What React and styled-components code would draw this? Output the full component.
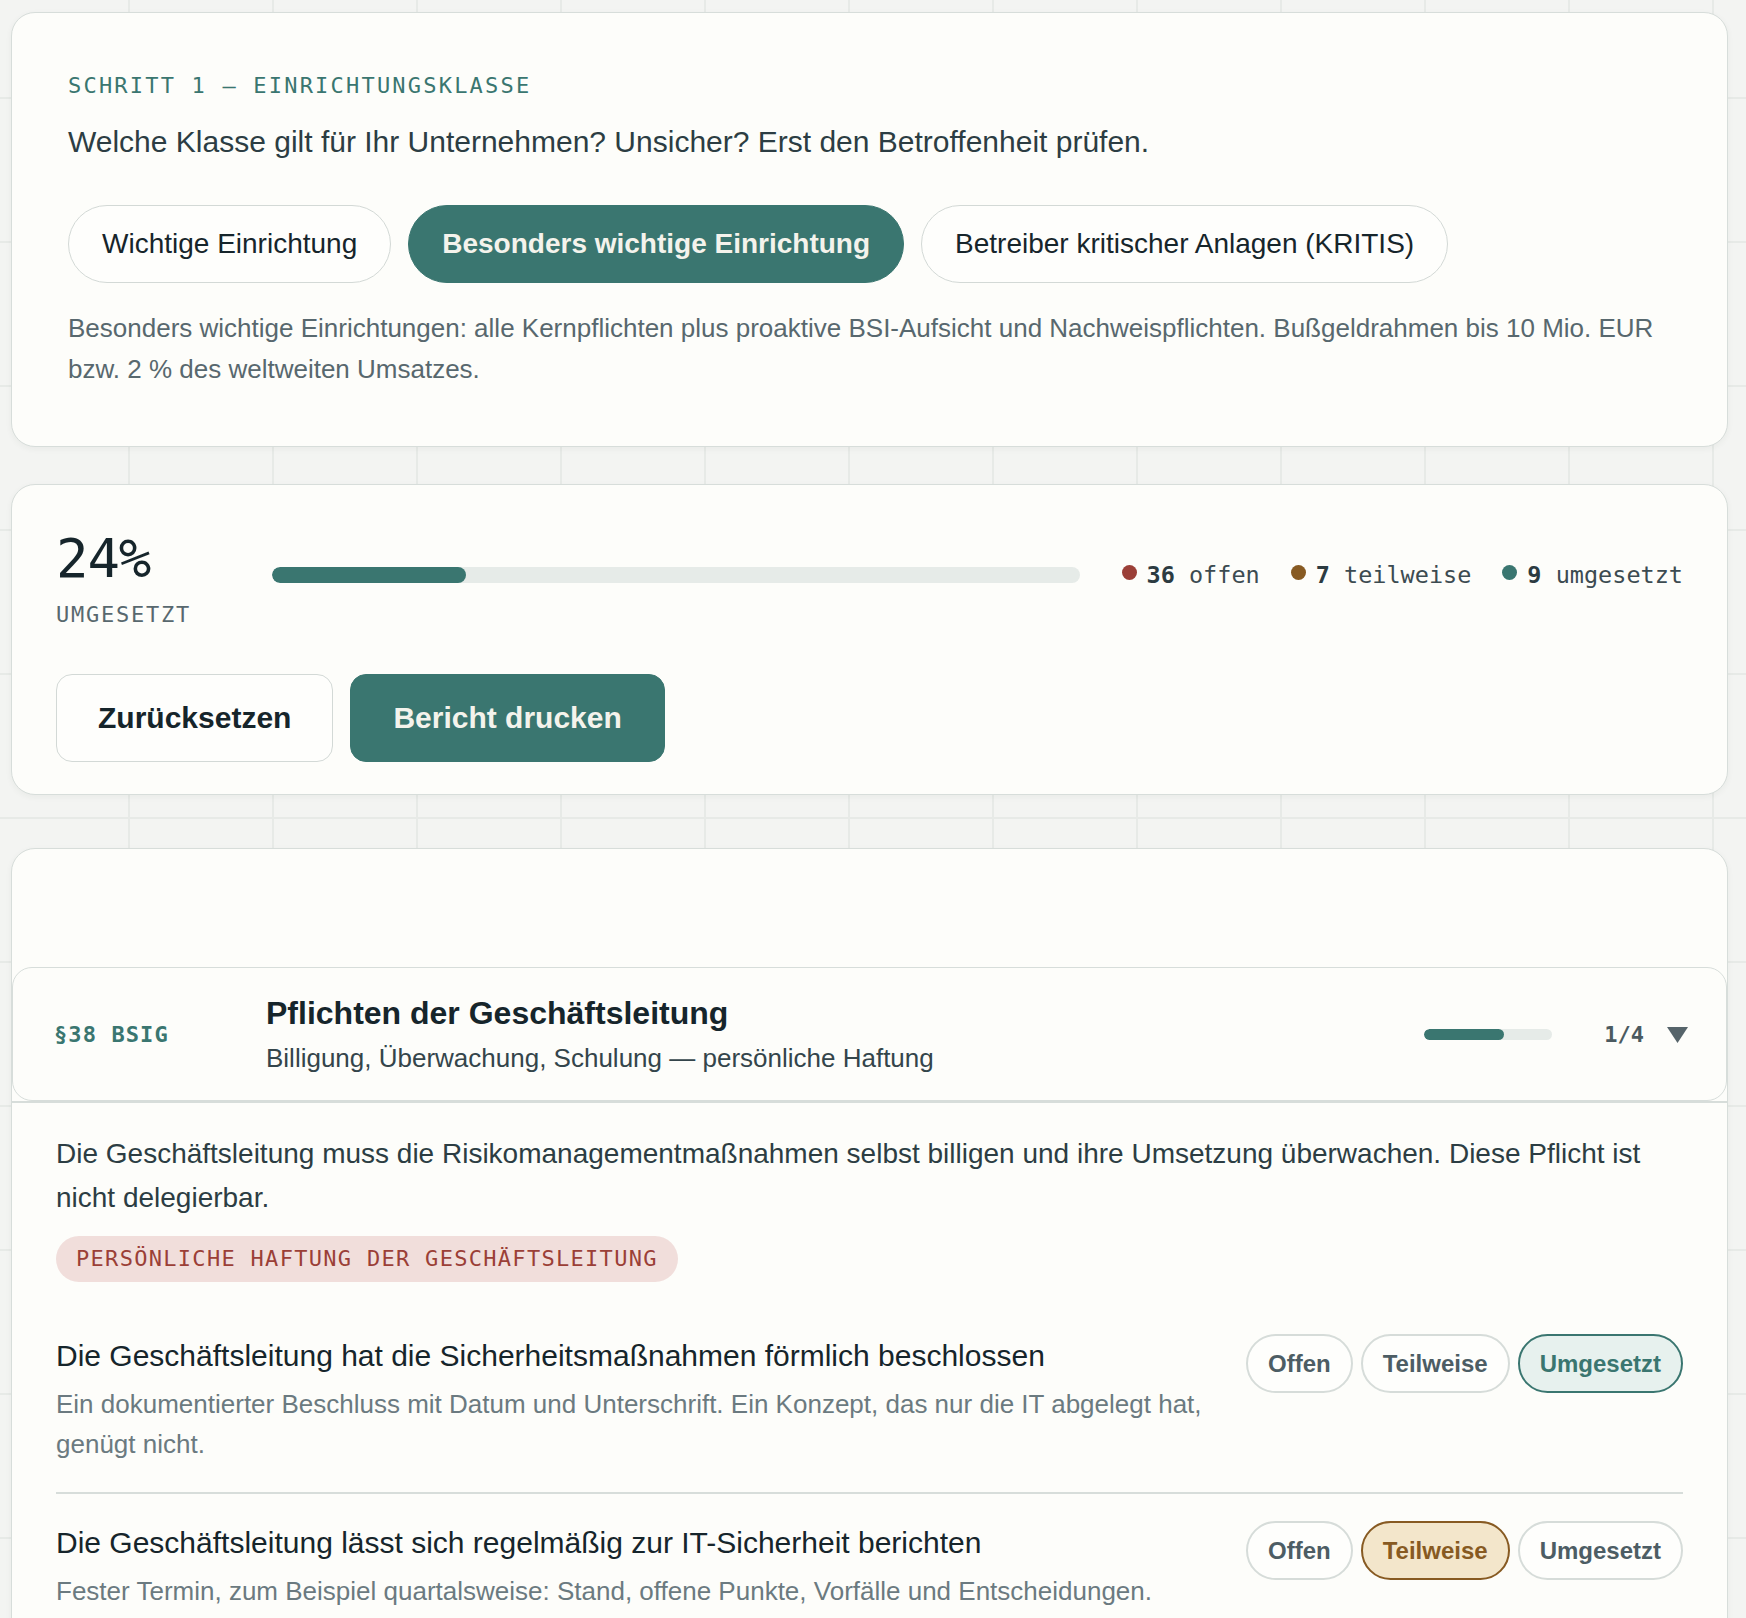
import React from "react";
import styled, { createGlobalStyle, css } from "styled-components";

const C = {
  teal: "#3a7670",
  bg: "#f3f4f2",
  grid: "#e7eae7",
  card: "#fdfdfa",
  border: "#d7ddda",
  ink: "#16252b",
  slate: "#2c3d43",
  muted: "#58686e",
  soft: "#6b7a80",
  red: "#9b3f37",
  brown: "#875a22",
};

const SANS = `"Liberation Sans", Arial, Helvetica, sans-serif`;
const MONO = `"DejaVu Sans Mono", "Liberation Mono", monospace`;

const Global = createGlobalStyle`
  html, body { margin: 0; padding: 0; }
  body {
    font-family: ${SANS};
    background-color: ${C.bg};
    background-image:
      linear-gradient(to right, ${C.grid} 2px, transparent 2px),
      linear-gradient(to bottom, ${C.grid} 2px, transparent 2px);
    background-size: 144px 144px;
    background-position: 128px 97px;
    color: ${C.ink};
  }
  * { box-sizing: border-box; }
  button { font-family: inherit; cursor: pointer; }
`;

const Page = styled.main`
  display: flex;
  flex-direction: column;
  padding: 12px 18px 40px 11px;
`;

const Panel = styled.section`
  background: ${C.card};
  border: 1px solid ${C.border};
  border-radius: 24px;
  box-shadow: 0 2px 6px rgba(30, 50, 45, 0.05);
  margin-top: ${(p) => p.$gap || 0}px;
`;

/* ---------- Step 1 ---------- */
const ClassPanel = styled(Panel)`
  padding: 56px;
`;

const Eyebrow = styled.div`
  font-family: ${MONO};
  font-size: 22px;
  line-height: 33px;
  letter-spacing: 0.1em;
  color: ${C.teal};
  text-transform: uppercase;
`;

const Question = styled.p`
  margin: 19px 0 0;
  font-size: 30px;
  line-height: 42px;
  color: ${C.slate};
`;

const ChipRow = styled.div`
  display: flex;
  gap: 17px;
  margin-top: 42px;
`;

const Chip = styled.button`
  height: 78px;
  padding: 0 33px;
  border-radius: 999px;
  font-size: 28px;
  line-height: 36px;
  border: 1px solid ${(p) => (p.$active ? C.teal : "#d3d9d6")};
  background: ${(p) => (p.$active ? C.teal : "#fefefc")};
  color: ${(p) => (p.$active ? "#f4f3ec" : C.ink)};
  font-weight: ${(p) => (p.$active ? 700 : 400)};
`;

const ClassNote = styled.p`
  margin: 25px 0 0;
  font-size: 26px;
  line-height: 40.8px;
  color: ${C.muted};
`;

/* ---------- Progress ---------- */
const ProgressPanel = styled(Panel)`
  padding: 47px 44px 32px;
`;

const StatRow = styled.div`
  display: flex;
  align-items: center;
  gap: 38px;
`;

const Stat = styled.div`
  width: 178px;
  flex-shrink: 0;
`;

const BigNumber = styled.div`
  font-family: ${MONO};
  font-size: 54px;
  line-height: 54px;
  letter-spacing: -0.02em;
  color: ${C.ink};
`;

const StatLabel = styled.div`
  margin-top: 16px;
  font-family: ${MONO};
  font-size: 22px;
  line-height: 26px;
  letter-spacing: 0.08em;
  color: ${C.muted};
`;

const Track = styled.div`
  flex: 1;
  height: 16px;
  border-radius: 999px;
  background: #e6ebe8;
  overflow: hidden;
  margin-top: -10px;
`;

const Fill = styled.div`
  height: 100%;
  border-radius: 999px;
  background: ${C.teal};
`;

const Legend = styled.div`
  display: flex;
  gap: 31px;
  margin-top: -10px;
  margin-left: 4px;
`;

const LegendItem = styled.span`
  display: inline-flex;
  align-items: center;
  gap: 10px;
  font-family: ${MONO};
  font-size: 23.5px;
  line-height: 30px;
  color: #3c4b51;
  white-space: nowrap;
  b { color: #2c3b41; }
`;

const Dot = styled.i`
  width: 15px;
  height: 15px;
  border-radius: 50%;
  background: ${(p) => p.$color};
  display: inline-block;
  margin-top: -4px;
`;

const ActionRow = styled.div`
  display: flex;
  gap: 17px;
  margin-top: 46px;
`;

const ActionButton = styled.button`
  height: 88px;
  padding: 0 41px;
  border-radius: 16px;
  font-size: 30px;
  font-weight: 700;
  ${(p) =>
    p.$primary
      ? css`
          background: ${C.teal};
          border: 1px solid ${C.teal};
          color: #f4f3ec;
          padding: 0 42px;
        `
      : css`
          background: #fefefc;
          border: 1px solid #d3d9d6;
          color: ${C.ink};
        `}
`;

/* ---------- Checklist ---------- */
const ChecklistPanel = styled(Panel)`
  padding-top: 118px;
  overflow: hidden;
`;

const SectionHeader = styled.div`
  display: flex;
  align-items: center;
  padding: 26px 38px 24px 41px;
  border: 1px solid ${C.border};
  border-radius: 20px;
  background: ${C.card};
`;

const Code = styled.div`
  width: 180px;
  flex-shrink: 0;
  margin-right: 32px;
  font-family: ${MONO};
  font-weight: 700;
  font-size: 22px;
  letter-spacing: 0.05em;
  color: ${C.teal};
`;

const HeaderText = styled.div`
  flex: 1;
`;

const SectionTitle = styled.h2`
  margin: 0;
  font-size: 32px;
  line-height: 38px;
  font-weight: 700;
  color: ${C.ink};
`;

const SectionSub = styled.div`
  margin-top: 8px;
  font-size: 26px;
  line-height: 36px;
  color: #34454b;
`;

const MiniBar = styled.div`
  width: 128px;
  height: 11px;
  margin-left: 24px;
  border-radius: 999px;
  background: #e6ebe8;
  overflow: hidden;
`;

const Count = styled.div`
  width: 68px;
  margin-left: 24px;
  text-align: right;
  font-family: ${MONO};
  font-weight: 700;
  font-size: 22px;
  color: #4b5a60;
`;

const Chevron = styled.svg`
  margin-left: 23px;
  display: block;
`;

const SectionBody = styled.div`
  border-top: 2px solid ${C.border};
  padding: 29px 44px 30px;
`;

const Intro = styled.p`
  margin: 0;
  font-size: 28px;
  line-height: 44.8px;
  color: ${C.slate};
`;

const Badge = styled.span`
  display: inline-block;
  margin-top: 15px;
  padding: 10px 20px;
  border-radius: 999px;
  background: #f1dedb;
  color: ${C.red};
  font-family: ${MONO};
  font-size: 22px;
  line-height: 26px;
  letter-spacing: 1.3px;
`;

const ItemList = styled.ul`
  list-style: none;
  margin: 25px 0 0;
  padding: 0;
`;

const Item = styled.li`
  display: flex;
  align-items: flex-start;
  gap: 40px;
  padding: 29px 0 28px;
  border-bottom: 2px solid ${C.border};
  &:last-child { border-bottom: 0; }
`;

const ItemText = styled.div`
  flex: 1;
`;

const ItemTitle = styled.div`
  font-size: 30px;
  line-height: 40px;
  color: ${C.ink};
`;

const ItemDesc = styled.div`
  margin-top: 8px;
  font-size: 26px;
  line-height: 40px;
  color: ${C.soft};
`;

const StatusGroup = styled.div`
  display: flex;
  gap: 8px;
  flex-shrink: 0;
  margin-top: -2px;
`;

const statusStyles = {
  open: css`
    background: #fbe9e6;
    border-color: ${C.red};
    color: ${C.red};
  `,
  partial: css`
    background: #f3e6cb;
    border-color: ${C.brown};
    color: ${C.brown};
  `,
  done: css`
    background: #e7f1ee;
    border-color: ${C.teal};
    color: ${C.teal};
  `,
};

const StatusButton = styled.button`
  height: 59px;
  padding: 0 20px;
  border-radius: 999px;
  border: 2px solid #d6dcd9;
  background: #fefefc;
  color: #4d5d64;
  font-size: 24px;
  font-weight: 700;
  ${(p) => p.$active && statusStyles[p.$kind]}
`;

const STATUS = [
  { kind: "open", label: "Offen" },
  { kind: "partial", label: "Teilweise" },
  { kind: "done", label: "Umgesetzt" },
];

const ITEMS = [
  {
    title: "Die Geschäftsleitung hat die Sicherheitsmaßnahmen förmlich beschlossen",
    desc: "Ein dokumentierter Beschluss mit Datum und Unterschrift. Ein Konzept, das nur die IT abgelegt hat, genügt nicht.",
    status: "done",
  },
  {
    title: "Die Geschäftsleitung lässt sich regelmäßig zur IT-Sicherheit berichten",
    desc: "Fester Termin, zum Beispiel quartalsweise: Stand, offene Punkte, Vorfälle und Entscheidungen.",
    status: "partial",
  },
  {
    title: "Die Geschäftsleitung hat an einer Cybersicherheits-Schulung teilgenommen",
    desc: "Regelmäßige Schulung, damit Risiken erkannt und Maßnahmen bewertet werden können.",
    status: "partial",
  },
  {
    title: "Verantwortlichkeiten für die Umsetzung sind schriftlich festgelegt",
    desc: "Wer setzt welche Maßnahme bis wann um, und wer berichtet an die Geschäftsleitung.",
    status: "open",
  },
];

const CLASSES = [
  "Wichtige Einrichtung",
  "Besonders wichtige Einrichtung",
  "Betreiber kritischer Anlagen (KRITIS)",
];

export default function App() {
  return (
    <>
      <Global />
      <Page>
        <ClassPanel>
          <Eyebrow>Schritt 1 — Einrichtungsklasse</Eyebrow>
          <Question>
            Welche Klasse gilt für Ihr Unternehmen? Unsicher? Erst den Betroffenheit prüfen.
          </Question>
          <ChipRow>
            {CLASSES.map((c, i) => (
              <Chip key={c} $active={i === 1}>
                {c}
              </Chip>
            ))}
          </ChipRow>
          <ClassNote>
            Besonders wichtige Einrichtungen: alle Kernpflichten plus proaktive BSI-Aufsicht und
            Nachweispflichten. Bußgeldrahmen bis 10 Mio. EUR bzw. 2 % des weltweiten Umsatzes.
          </ClassNote>
        </ClassPanel>

        <ProgressPanel $gap={37}>
          <StatRow>
            <Stat>
              <BigNumber>24%</BigNumber>
              <StatLabel>UMGESETZT</StatLabel>
            </Stat>
            <Track>
              <Fill style={{ width: "24%" }} />
            </Track>
            <Legend>
              <LegendItem>
                <Dot $color={C.red} />
                <span>
                  <b>36</b> offen
                </span>
              </LegendItem>
              <LegendItem>
                <Dot $color={C.brown} />
                <span>
                  <b>7</b> teilweise
                </span>
              </LegendItem>
              <LegendItem>
                <Dot $color={C.teal} />
                <span>
                  <b>9</b> umgesetzt
                </span>
              </LegendItem>
            </Legend>
          </StatRow>
          <ActionRow>
            <ActionButton>Zurücksetzen</ActionButton>
            <ActionButton $primary>Bericht drucken</ActionButton>
          </ActionRow>
        </ProgressPanel>

        <ChecklistPanel $gap={53}>
          <SectionHeader>
            <Code>§38 BSIG</Code>
            <HeaderText>
              <SectionTitle>Pflichten der Geschäftsleitung</SectionTitle>
              <SectionSub>Billigung, Überwachung, Schulung — persönliche Haftung</SectionSub>
            </HeaderText>
            <MiniBar>
              <Fill style={{ width: "62.5%" }} />
            </MiniBar>
            <Count>1/4</Count>
            <Chevron width="21" height="16" viewBox="0 0 21 16" aria-hidden="true">
              <polygon points="0,0 21,0 10.5,16" fill="#56646a" />
            </Chevron>
          </SectionHeader>
          <SectionBody>
            <Intro>
              Die Geschäftsleitung muss die Risikomanagementmaßnahmen selbst billigen und ihre
              Umsetzung überwachen. Diese Pflicht ist nicht delegierbar.
            </Intro>
            <Badge>PERSÖNLICHE HAFTUNG DER GESCHÄFTSLEITUNG</Badge>
            <ItemList>
              {ITEMS.map((it) => (
                <Item key={it.title}>
                  <ItemText>
                    <ItemTitle>{it.title}</ItemTitle>
                    <ItemDesc>{it.desc}</ItemDesc>
                  </ItemText>
                  <StatusGroup>
                    {STATUS.map((s) => (
                      <StatusButton key={s.kind} $kind={s.kind} $active={it.status === s.kind}>
                        {s.label}
                      </StatusButton>
                    ))}
                  </StatusGroup>
                </Item>
              ))}
            </ItemList>
          </SectionBody>
        </ChecklistPanel>
      </Page>
    </>
  );
}
